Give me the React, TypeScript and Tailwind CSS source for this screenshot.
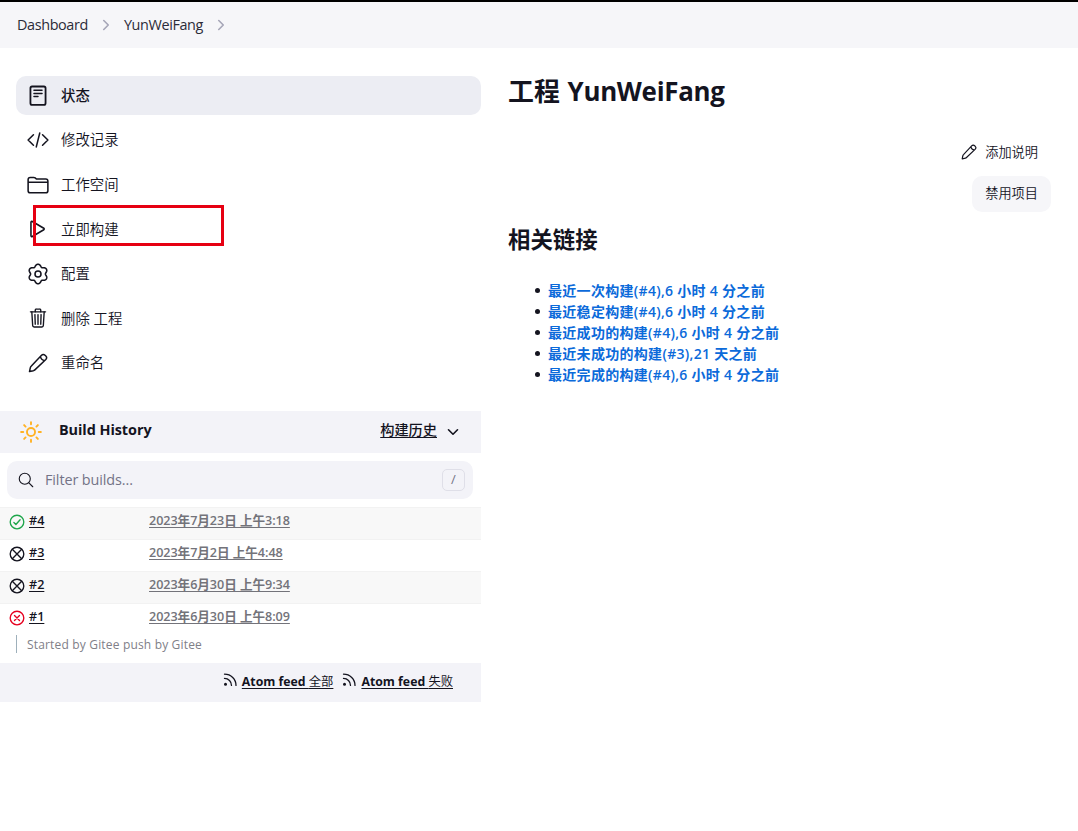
import type { ReactNode } from "react";
import { IoTrashOutline, IoSearchOutline } from "react-icons/io5";

type IconProps = { className?: string };

function Svg({ className, width = 32, children }: { className?: string; width?: number; children: ReactNode }) {
  return (
    <svg viewBox="0 0 512 512" className={className} fill="none" stroke="currentColor" strokeWidth={width} strokeLinecap="round" strokeLinejoin="round">
      {children}
    </svg>
  );
}

const StatusIcon = ({ className }: IconProps) => (
  <Svg className={className} width={42}>
    <rect x="80" y="35" width="352" height="428" rx="38" />
    <path d="M162 122h188M162 196h188M162 270h94" strokeWidth={34} />
  </Svg>
);

const CodeIcon = ({ className }: IconProps) => (
  <Svg className={className} width={36}>
    <path d="M150 134L26 256l124 122M362 134l124 122-124 122M296 96l-80 320" />
  </Svg>
);

const FolderIcon = ({ className }: IconProps) => (
  <Svg className={className} width={36}>
    <path d="M486 192v196a50 50 0 01-50 50H76a50 50 0 01-50-50V130a50 50 0 0150-50h82c12 0 22 4 32 12l18 14c10 8 20 10 32 10h196a50 50 0 0150 50zM26 192h460" />
  </Svg>
);

const PlayIcon = ({ className }: IconProps) => (
  <Svg className={className} width={36}>
    <path d="M92 101v310c0 17.44 17 28.52 31 20.16l267.9-158.37c12.12-7.25 12.12-26.33 0-33.58L123 80.84c-14-8.36-31 2.72-31 20.16z" />
  </Svg>
);

/* Six-lobed cog outline: the radius swells once every 60 degrees. */
const gearPoints = Array.from({ length: 120 }, (_, i) => {
  const a = (i * Math.PI) / 60;
  const r = 202 + 27 * Math.cos(6 * a) - 3 * Math.cos(12 * a);
  return `${(256 + r * Math.sin(a)).toFixed(1)},${(256 - r * Math.cos(a)).toFixed(1)}`;
}).join(" ");

const GearIcon = ({ className }: IconProps) => (
  <Svg className={className} width={36}>
    <circle cx="256" cy="256" r="70" />
    <polygon points={gearPoints} />
  </Svg>
);

const PencilIcon = ({ className }: IconProps) => (
  <Svg className={className} width={38}>
    <path d="M340 62c34-34 68-34 96-6l20 20c28 28 28 62-6 96L176 432c-10 10-22 16-36 20L38 476l22-102c4-14 10-26 20-36zM322 82c-4 58 50 112 108 108" />
  </Svg>
);

const SunIcon = ({ className }: IconProps) => (
  <Svg className={className} width={44}>
    <path d="M256 26v50M256 436v50M416 96l-34 34M130 382l-34 34M486 256h-50M76 256H26M416 416l-34-34M130 130L96 96" />
    <circle cx="256" cy="256" r="94" />
  </Svg>
);

const RssIcon = ({ className }: IconProps) => (
  <svg viewBox="0 0 14 14" className={className} fill="none" stroke="currentColor" strokeWidth="1.3" strokeLinecap="round">
    <path d="M1.5 1.2c6.6 0 11.5 5 11.5 11.2M1.5 5.4c4 0 7 3.1 7 7" />
    <circle cx="2.5" cy="11.2" r="1.5" fill="currentColor" stroke="none" />
  </svg>
);

const Chevron = ({ className }: IconProps) => (
  <Svg className={className} width={52}>
    <path d="M184 112l144 144-144 144" />
  </Svg>
);

type BuildState = "success" | "aborted" | "failed";

function BuildIcon({ state }: { state: BuildState }) {
  const color = state === "success" ? "text-[#1ea64b]" : state === "failed" ? "text-[#e6001f]" : "text-[#14141f]";
  return (
    <svg viewBox="0 0 16 16" className={"h-4 w-4 shrink-0 " + color} fill="none" stroke="currentColor" strokeWidth="1.35" strokeLinecap="round" strokeLinejoin="round">
      <circle cx="8" cy="8" r="6.8" />
      {state === "success" && <path d="M4.9 8.5l2 2 4.2-4.8" />}
      {state === "failed" && <path d="M5.5 5.5l5 5M10.5 5.5l-5 5" />}
      {state === "aborted" && <path d="M3.3 3.3l9.4 9.4M12.7 3.3l-9.4 9.4" />}
    </svg>
  );
}

const tasks = [
  { label: "状态", icon: <StatusIcon className="h-[22px] w-[22px]" />, active: true },
  { label: "修改记录", icon: <CodeIcon className="h-[22px] w-[22px]" /> },
  { label: "工作空间", icon: <FolderIcon className="h-[22px] w-[22px]" /> },
  { label: "立即构建", icon: <PlayIcon className="h-[22px] w-[22px]" />, marked: true },
  { label: "配置", icon: <GearIcon className="h-[22px] w-[22px]" /> },
  { label: "删除 工程", icon: <IoTrashOutline className="h-[22px] w-[22px]" /> },
  { label: "重命名", icon: <PencilIcon className="h-5 w-5" /> },
];

const builds: { id: string; date: string; state: BuildState; note?: string }[] = [
  { id: "#4", date: "2023年7月23日 上午3:18", state: "success" },
  { id: "#3", date: "2023年7月2日 上午4:48", state: "aborted" },
  { id: "#2", date: "2023年6月30日 上午9:34", state: "aborted" },
  { id: "#1", date: "2023年6月30日 上午8:09", state: "failed", note: "Started by Gitee push by Gitee" },
];

const links = [
  "最近一次构建(#4),6 小时 4 分之前",
  "最近稳定构建(#4),6 小时 4 分之前",
  "最近成功的构建(#4),6 小时 4 分之前",
  "最近未成功的构建(#3),21 天之前",
  "最近完成的构建(#4),6 小时 4 分之前",
];

function Sidebar() {
  return (
    <aside className="w-[481px] shrink-0 pt-7">
      <nav className="flex flex-col gap-[5.6px] pl-4">
        {tasks.map((t) => (
          <div key={t.label} className={"relative flex h-[39px] items-center rounded-[10px] pl-[11px] text-[14.4px] " + (t.active ? "bg-[#ecedf3] font-medium" : "font-[350]")}>
            <span className="flex w-[22px] justify-center">{t.icon}</span>
            <span className="mt-[0.6px] ml-3 leading-5">{t.label}</span>
            {t.marked && <span className="absolute -top-[4.8px] left-[17px] h-[41px] w-[191px] border-3 border-[#e60012]" />}
          </div>
        ))}
      </nav>
      <section className="mt-[28.4px]">
        <div className="flex h-[42px] items-center bg-[#f3f3f8] pr-[20px] pl-5">
          <SunIcon className="h-[22px] w-[22px] text-[#ffb224]" />
          <h2 className="mb-[5px] ml-[17px] text-[14.4px] font-bold tracking-[-0.05px]">Build History</h2>
          <a className="mb-[4px] ml-auto text-[14.2px] font-medium underline underline-offset-2">构建历史</a>
          <Chevron className="mt-[1px] ml-[8px] h-4 w-4 rotate-90" />
        </div>
        <div className="mt-2 mr-2 ml-[7px] flex h-[38px] items-center rounded-[10px] bg-[#f3f3f8] pr-2 pl-[10px]">
          <IoSearchOutline className="h-[18px] w-[18px]" />
          <span className="ml-[10px] text-[14.4px] tracking-[-0.1px] text-[#737387]">Filter builds...</span>
          <kbd className="ml-auto flex h-[22px] w-[23px] items-center justify-center rounded-[5px] border border-[#dfdfe8] font-[inherit] text-[13px] text-[#737387]">/</kbd>
        </div>
        <div className="mt-2 flex flex-col">
          {builds.map((b, i) => (
            <div key={b.id} className={"border-t border-[#f2f2f2] pl-[9px] " + (i % 2 === 0 ? "bg-[#f8f8f8] " : "bg-white ") + (b.note ? "h-[60px]" : "h-8")}>
              <div className="flex h-[28px] items-center text-[12.6px] font-semibold">
                <BuildIcon state={b.state} />
                <a className="mb-[2px] ml-1 w-[120px] font-semibold underline underline-offset-2">{b.id}</a>
                <a className="mb-[2px] tracking-[-0.05px] text-[#73737a] underline underline-offset-2">{b.date}</a>
              </div>
              {b.note && <p className="mt-[3px] ml-[7px] h-[18px] border-l border-[#9eb0bb] pl-[10px] text-[12px] leading-[19px] tracking-[0.17px] text-[#808088]">{b.note}</p>}
            </div>
          ))}
        </div>
        <div className="flex h-[39px] items-center justify-end gap-[9px] bg-[#f3f3f8] pr-7 text-[12.3px] font-bold">
          {["全部", "失败"].map((s) => (
            <span key={s} className="flex items-center gap-[5px]">
              <RssIcon className="mb-[5px] h-[14px] w-[14px]" />
              <a className="underline underline-offset-2">Atom feed <span className="font-normal">{s}</span></a>
            </span>
          ))}
        </div>
      </section>
    </aside>
  );
}

function Main() {
  return (
    <main className="flex flex-1 flex-col pt-[24px] pr-[27px] pl-[27px]">
      <h1 className="text-[25.9px] leading-[38px] font-semibold">工程 <span className="ml-[1px] font-bold tracking-[-0.28px]">YunWeiFang</span></h1>
      <div className="mt-[24px] flex flex-col items-end text-[13.2px] font-[350]">
        <button className="flex h-9 items-center gap-2 px-[13px]">
          <PencilIcon className="h-4 w-4" />
          <span className="mt-px">添加说明</span>
        </button>
        <button className="mt-[6px] h-9 rounded-[10px] bg-[#f6f6f9] px-[13px]">禁用项目</button>
      </div>
      <h2 className="mt-[12px] text-[22.4px] leading-8 font-semibold">相关链接</h2>
      <ul className="mt-[24px] flex flex-col pl-[27px] text-[14px] leading-[21px] font-semibold tracking-[0.3px]">
        {links.map((l) => (
          <li key={l} className="flex items-center gap-[10px]">
            <span className="h-[5px] w-[5px] rounded-full bg-[#14141f]" />
            <a className="-ml-[2px] text-[#0b6ada]">{l}</a>
          </li>
        ))}
      </ul>
    </main>
  );
}

export default function App() {
  return (
    <div className="min-h-[831px] bg-white font-['Open_Sans','Noto_Sans_CJK_SC',sans-serif] text-[#14141f]">
      <header className="flex h-12 items-center border-t-2 border-black bg-[#f6f6f9] pl-[17px] text-[14.4px] tracking-[-0.37px] text-[#2b2b38]">
        <span>Dashboard</span>
        <Chevron className="mx-[10px] h-4 w-4 text-[#a6a6b8]" />
        <span>YunWeiFang</span>
        <Chevron className="mx-[10px] h-4 w-4 text-[#a6a6b8]" />
      </header>
      <div className="flex">
        <Sidebar />
        <Main />
      </div>
    </div>
  );
}
